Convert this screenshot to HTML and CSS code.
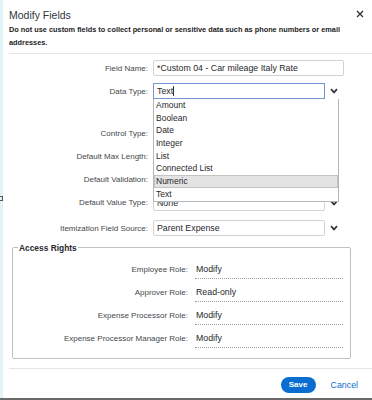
FILE: index.html
```html
<!DOCTYPE html>
<html>
<head>
<meta charset="utf-8">
<link rel="stylesheet" href="styles.css">
</head>
<body>
<div class="page">
  <div class="strip"><span class="strip-mark"></span></div>
  <div class="dialog">
    <div class="head">
      <div class="title">Modify Fields</div>
      <svg class="close" width="8" height="8" viewBox="0 0 8 8"><path d="M1 1L7 7M7 1L1 7" stroke="#32363a" stroke-width="1.4" fill="none"/></svg>
    </div>
    <div class="warn">Do not use custom fields to collect personal or sensitive data such as phone numbers or email addresses.</div>
    <div class="sep"></div>
    <div class="form">
      <div class="frow">
        <label class="lbl">Field Name:</label>
        <div class="inp wide">*Custom 04 - Car mileage Italy Rate</div>
      </div>
      <div class="frow">
        <label class="lbl">Data Type:</label>
        <div class="inp focus">Text<span class="caret"></span>
          <ul class="list">
            <li>Amount</li>
            <li>Boolean</li>
            <li>Date</li>
            <li>Integer</li>
            <li>List</li>
            <li>Connected List</li>
            <li class="sel">Numeric</li>
            <li>Text</li>
          </ul>
        </div>
        <svg class="chev" width="8" height="6" viewBox="0 0 8 6"><path d="M1 1.2L4 4.4L7 1.2" stroke="#32363a" stroke-width="1.7" fill="none"/></svg>
      </div>
      <div class="frow gap-ct">
        <label class="lbl">Control Type:</label>
        <div class="inp"></div>
        <svg class="chev" width="8" height="6" viewBox="0 0 8 6"><path d="M1 1.2L4 4.4L7 1.2" stroke="#32363a" stroke-width="1.7" fill="none"/></svg>
      </div>
      <div class="frow">
        <label class="lbl">Default Max Length:</label>
        <div class="inp"></div>
      </div>
      <div class="frow">
        <label class="lbl">Default Validation:</label>
        <div class="inp"></div>
        <svg class="chev" width="8" height="6" viewBox="0 0 8 6"><path d="M1 1.2L4 4.4L7 1.2" stroke="#32363a" stroke-width="1.7" fill="none"/></svg>
      </div>
      <div class="frow">
        <label class="lbl">Default Value Type:</label>
        <div class="inp">None</div>
        <svg class="chev" width="8" height="6" viewBox="0 0 8 6"><path d="M1 1.2L4 4.4L7 1.2" stroke="#32363a" stroke-width="1.7" fill="none"/></svg>
      </div>
      <div class="frow gap-it">
        <label class="lbl">Itemization Field Source:</label>
        <div class="inp">Parent Expense</div>
        <svg class="chev" width="8" height="6" viewBox="0 0 8 6"><path d="M1 1.2L4 4.4L7 1.2" stroke="#32363a" stroke-width="1.7" fill="none"/></svg>
      </div>
    </div>
    <fieldset class="rights">
      <legend>Access Rights</legend>
      <div class="rrow"><span class="rlbl">Employee Role:</span><span class="rval">Modify</span></div>
      <div class="rrow"><span class="rlbl">Approver Role:</span><span class="rval">Read-only</span></div>
      <div class="rrow"><span class="rlbl">Expense Processor Role:</span><span class="rval">Modify</span></div>
      <div class="rrow"><span class="rlbl">Expense Processor Manager Role:</span><span class="rval">Modify</span></div>
    </fieldset>
    <div class="sep sep2"></div>
    <div class="foot">
      <button class="save">Save</button>
      <button class="cancel">Cancel</button>
    </div>
  </div>
</div>
</body>
</html>
```
FILE: styles.css
```css
html, body {
  margin: 0;
  padding: 0;
  background: #fff;
}
body {
  width: 372px;
  height: 400px;
  overflow: hidden;
  font-family: "Liberation Sans", Arial, sans-serif;
  color: #32363a;
}
.page {
  display: flex;
  height: 398px;
  border-bottom: 2px solid #6a6a6a;
}
.strip {
  width: 3px;
  flex: none;
  background: #e0f3f5;
  position: relative;
}
.strip-mark {
  position: absolute;
  left: 0;
  top: 196px;
  width: 2px;
  height: 3px;
  border: 1px solid #555;
  border-left: none;
}
.dialog {
  flex: 1;
  display: flex;
  flex-direction: column;
  padding-left: 6px;
  min-width: 0;
}
.head {
  display: flex;
  justify-content: space-between;
  align-items: center;
  padding-top: 7px;
  height: 16px;
  padding-right: 8px;
}
.title {
  font-size: 10.5px;
  line-height: 16px;
  color: #32363a;
}
.close {
  display: block;
  margin-top: -3px;
}
.warn {
  font-size: 7.35px;
  font-weight: bold;
  line-height: 13px;
  color: #1d1d1d;
  max-width: 345px;
}
.sep {
  margin-top: 4px;
  border-top: 1px solid #e5e5e5;
}
.form {
  padding-top: 6px;
  display: flex;
  flex-direction: column;
  gap: 7px;
}
.frow {
  display: grid;
  grid-template-columns: 139px 172px 14px;
  column-gap: 5px;
  align-items: center;
  height: 16px;
}
.gap-ct { margin-top: 19.5px; }
.gap-it { margin-top: 2.5px; }
.lbl {
  text-align: right;
  font-size: 8px;
  color: #45484b;
  white-space: nowrap;
}
.inp {
  position: relative;
  box-sizing: border-box;
  height: 16px;
  border: 1px solid #cfd3d7;
  border-radius: 2px;
  font-size: 8.8px;
  line-height: 14px;
  padding-left: 3px;
  color: #26292c;
  white-space: nowrap;
}
.inp.wide {
  grid-column: 2 / span 2;
}
.inp.focus {
  border-color: #7696d0;
  border-radius: 0;
}
.caret {
  display: inline-block;
  width: 1px;
  height: 10px;
  background: #32363a;
  vertical-align: -2px;
}
.chev {
  display: block;
}
.list {
  position: absolute;
  z-index: 2;
  left: -1px;
  top: 15px;
  width: 186px;
  margin: 0;
  padding: 0;
  list-style: none;
  box-sizing: border-box;
  border: 1px solid #b3b8bd;
  border-top: none;
  background: #fff;
}
.list li {
  height: 12.7px;
  line-height: 12.7px;
  font-size: 8.5px;
  padding-left: 2px;
  box-sizing: border-box;
  color: #26292c;
}
.list li.sel {
  background: #e3e3e3;
  border: 1px solid #c3c3c3;
  line-height: 10.7px;
  padding-left: 1px;
}
.rights {
  margin: 5.5px 21px 0 3px;
  padding: 9px 7px 10px 5px;
  border: 1px solid #bcc1c6;
  border-radius: 2px;
  display: flex;
  flex-direction: column;
  gap: 7px;
  min-width: 0;
}
.rights legend {
  font-size: 8.4px;
  font-weight: bold;
  line-height: 12px;
  padding: 0 1px;
  color: #26292c;
}
.rrow {
  display: grid;
  grid-template-columns: 1fr 148px;
  column-gap: 7px;
  align-items: start;
}
.rlbl {
  text-align: right;
  font-size: 8px;
  line-height: 13px;
  color: #45484b;
  white-space: nowrap;
}
.rval {
  font-size: 8.8px;
  line-height: 13px;
  padding: 0 0 2px 1px;
  border-bottom: 1px dotted #9aa0a6;
  color: #26292c;
}
.sep2 {
  margin-top: 9px;
}
.foot {
  display: flex;
  justify-content: flex-end;
  align-items: center;
  padding: 8px 14px 0 0;
  gap: 15px;
}
.save {
  width: 35px;
  height: 16px;
  border: none;
  border-radius: 8px;
  background: #0a6ed1;
  color: #fff;
  font-family: "Liberation Sans", Arial, sans-serif;
  font-weight: bold;
  font-size: 8px;
  padding: 0;
}
.cancel {
  border: none;
  background: none;
  padding: 0;
  color: #0a6ed1;
  font-family: "Liberation Sans", Arial, sans-serif;
  font-size: 8.8px;
}
```
